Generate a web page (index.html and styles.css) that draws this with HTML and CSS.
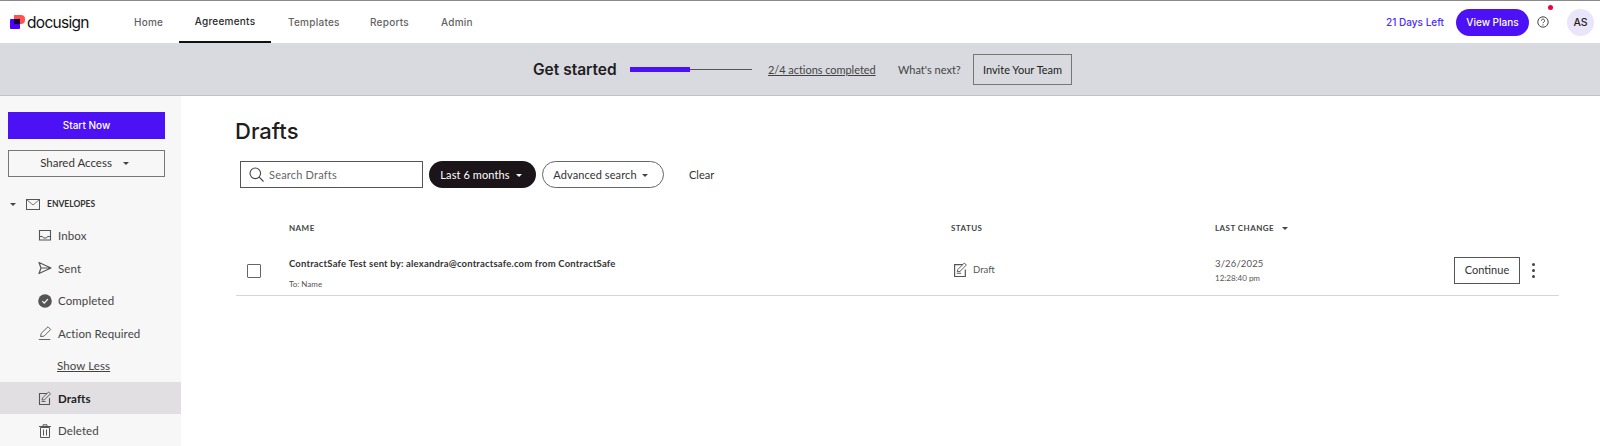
FILE: index.html
```html
<!DOCTYPE html>
<html lang="en">
<head>
<meta charset="utf-8">
<title>Docusign Drafts</title>
<link rel="stylesheet" href="styles.css">
</head>
<body>
<header class="topnav">
  <a class="logo">
    <svg class="logo-mark" viewBox="0 0 15 14" width="15" height="14"><path d="M4 0h7a4 4 0 0 1 4 4v1a4 4 0 0 1-4 4H4z" fill="#ff5252"/><rect x="0" y="4" width="10" height="10" rx="1" fill="#4c00ff"/><rect x="4" y="4" width="6" height="5" fill="#130032"/></svg>
    <span class="logo-text">docusign</span>
  </a>
  <nav class="tabs">
    <a class="tab tab-home">Home</a>
    <a class="tab tab-agreements active">Agreements</a>
    <a class="tab tab-templates">Templates</a>
    <a class="tab tab-reports">Reports</a>
    <a class="tab tab-admin">Admin</a>
  </nav>
  <div class="nav-right">
    <a class="days">21 Days Left</a>
    <a class="plans">View Plans</a>
    <span class="help">
      <svg viewBox="0 0 12 12" width="12" height="12"><circle cx="6" cy="6" r="5.2" fill="none" stroke="#444" stroke-width="1"/><path d="M4.4 4.7a1.6 1.6 0 1 1 2.5 1.3c-.6.4-.9.6-.9 1.2" fill="none" stroke="#444" stroke-width="1"/><circle cx="6" cy="8.9" r=".6" fill="#444"/></svg>
      <i class="dot"></i>
    </span>
    <span class="avatar">AS</span>
  </div>
</header>

<section class="banner">
  <strong class="gs">Get started</strong>
  <span class="progress"><i class="progress-fill"></i></span>
  <a class="actions">2/4 actions completed</a>
  <span class="next">What's next?</span>
  <a class="invite">Invite Your Team</a>
</section>

<div class="page">
  <aside class="sidebar">
    <a class="btn-start">Start Now</a>
    <a class="btn-shared">Shared Access <i class="caret"></i></a>
    <div class="env-head">
      <i class="caret caret-env"></i>
      <svg viewBox="0 0 14 11" width="14" height="11"><rect x=".5" y=".5" width="13" height="10" fill="none" stroke="#555" /><path d="M1 1l6 5 6-5" fill="none" stroke="#555" stroke-width=".8"/></svg>
      <span>ENVELOPES</span>
    </div>
    <ul class="menu">
      <li class="item"><svg class="ico" viewBox="0 0 14 14"><path d="M1.5 2.500h11v9.500h-11z" fill="none" stroke="#555" stroke-width="1.100"/><path d="M1.500 8.500h3l1 1.500h3l1-1.500h3" fill="none" stroke="#555"/></svg>Inbox</li>
      <li class="item"><svg class="ico" viewBox="0 0 14 14"><path d="M1 1.500 13 7 1 12.500 3 7zM3 7h10" fill="none" stroke="#555" stroke-width="1.200" stroke-linejoin="round"/></svg>Sent</li>
      <li class="item"><svg class="ico" viewBox="0 0 14 14"><circle cx="7" cy="7" r="6.800" fill="#555"/><path d="M4.300 7.200l2 2 3.500-4" fill="none" stroke="#fff" stroke-width="1.200"/></svg>Completed</li>
      <li class="item"><svg class="ico" viewBox="0 0 14 14"><path d="M2.500 10.500l.8-3.300L10 .8l2.700 2.700-6.700 6.700zM.8 13.500h11.500" fill="none" stroke="#555" stroke-width=".9"/></svg>Action Required</li>
      <li class="item item-link"><a>Show Less</a></li>
      <li class="item selected"><svg class="ico" viewBox="0 0 14 14"><path d="M9 2.500H1.500v11h10V7" fill="none" stroke="#555" stroke-width="1.100"/><path d="M4 9l.5-2 6-6 2 1.800-6 6zM3.500 10.500h4" fill="none" stroke="#555" stroke-width=".9"/></svg>Drafts</li>
      <li class="item"><svg class="ico" viewBox="0 0 14 14"><path d="M2.500 3.500h9v10h-9zM1 2.500h12M5 2.500V.8h4v1.700M5.500 5.500v6M8.500 5.500v6" fill="none" stroke="#555" stroke-width="1"/></svg>Deleted</li>
    </ul>
  </aside>

  <main class="main">
    <h1 class="title">Drafts</h1>
    <div class="filters">
      <label class="search">
        <svg viewBox="0 0 15 15" width="15" height="15"><circle cx="6.300" cy="6.300" r="5.300" fill="none" stroke="#444" stroke-width="1.100"/><path d="M10.200 10.200 14.500 14.500" stroke="#444" stroke-width="1.100"/></svg>
        <span>Search Drafts</span>
      </label>
      <a class="pill pill-dark">Last 6 months <i class="caret caret-light"></i></a>
      <a class="pill pill-outline">Advanced search <i class="caret"></i></a>
      <a class="clear">Clear</a>
    </div>
    <div class="grid grid-head">
      <span></span>
      <span>NAME</span>
      <span>STATUS</span>
      <span>LAST CHANGE <i class="caret caret-head"></i></span>
      <span></span>
    </div>
    <div class="grid grid-row">
      <span class="check"></span>
      <div class="subject">
        <div class="subject-title">ContractSafe Test sent by: alexandra@contractsafe.com from ContractSafe</div>
        <div class="subject-to">To: Name</div>
      </div>
      <div class="status"><svg class="ico" viewBox="0 0 14 14"><path d="M9 2.500H1.500v11h10V7" fill="none" stroke="#555" stroke-width="1.100"/><path d="M4 9l.5-2 6-6 2 1.800-6 6zM3.500 10.500h4" fill="none" stroke="#555" stroke-width=".9"/></svg>Draft</div>
      <div class="changed"><div class="date">3/26/2025</div><div class="time">12:28:40 pm</div></div>
      <div class="row-actions">
        <a class="continue">Continue</a>
        <span class="kebab"><i></i><i></i><i></i></span>
      </div>
    </div>
  </main>
</div>
</body>
</html>
```

FILE: styles.css
```css
* { box-sizing: border-box; }
html, body { margin: 0; height: 446px; overflow: hidden; }
body { font-family: Lato, "Noto Sans", sans-serif; color: #1e1e1e; background: #fff; font-size: 11px; }
a { color: inherit; }
i { display: block; }

.topnav { height: 43px; border-top: 1px solid #8a8a8a; display: flex; align-items: center; padding: 0 6px 0 10px; background: #fff; }
.logo { display: flex; align-items: center; gap: 2px; width: 124px; height: 42px; }
.logo-text { font-family: Inter, sans-serif; font-size: 15.5px; letter-spacing: -.7px; font-weight: 400; color: #111; }
.tabs { display: flex; height: 42px; }
.tab { display: flex; align-items: center; font-family: Inter, sans-serif; font-size: 10px; font-weight: 500; color: #636363; letter-spacing: .25px; }
.tab-home { margin-right: 17px; width: 28px; }
.tab-agreements { margin-right: 17px; width: 92px; justify-content: center; color: #2a2a2a; border-bottom: 2.500px solid #111; }
.tab-templates { margin-right: 32px; width: 50px; }
.tab-reports { margin-right: 33px; width: 38px; }
.nav-right { margin-left: auto; display: flex; align-items: center; }
.days { color: #4c2cff; font-family: Inter, sans-serif; font-size: 10px; font-weight: 500; margin-right: 12px; }
.plans { width: 73px; height: 27px; border-radius: 14px; background: #4c12f5; color: #fff; font-family: Inter, sans-serif; font-size: 10px; font-weight: 500; display: flex; align-items: center; justify-content: center; margin-right: 8px; }
.help { position: relative; width: 12px; height: 12px; margin-right: 18px; display: block; }
.help svg { display: block; }
.dot { position: absolute; left: 11px; top: -11px; width: 5px; height: 5px; border-radius: 50%; background: #f0003c; }
.avatar { width: 27px; height: 27px; border-radius: 50%; background: #e9e5fb; display: flex; align-items: center; justify-content: center; font-family: Inter, sans-serif; font-size: 10.500px; font-weight: 500; color: #222; }

.banner { height: 53px; background: #d9dae0; border-bottom: 1px solid #bfc0c8; display: flex; align-items: center; padding-left: 533px; }
.gs { font-family: Inter, sans-serif; font-size: 15.500px; font-weight: 600; width: 97px; color: #1e1e1e; }
.progress { width: 122px; height: 1px; background: #555; position: relative; margin-right: 16px; }
.progress-fill { position: absolute; left: 0; top: -2px; width: 60px; height: 5px; background: #4c12f5; }
.actions { text-decoration: underline; color: #444; font-size: 11px; width: 130px; letter-spacing: -.05px; }
.next { color: #444; font-size: 11px; width: 75px; }
.invite { width: 99px; height: 31px; border: 1px solid #777; display: flex; align-items: center; justify-content: center; font-size: 11px; color: #222; }

.page { display: flex; height: 350px; }
.sidebar { width: 181px; background: #f7f7f7; padding: 16px 0 0 8px; flex: none; }
.btn-start { display: flex; align-items: center; justify-content: center; width: 157px; height: 27px; padding-bottom: 2px; background: #4c12f5; color: #fff; font-family: Inter, sans-serif; font-size: 10px; font-weight: 500; }
.btn-shared { display: flex; align-items: center; justify-content: center; gap: 11px; width: 157px; height: 27px; margin-top: 11px; padding: 0 4px 2px 0; border: 1px solid #777; font-size: 11.500px; color: #333; }
.caret { width: 0; height: 0; border-left: 3px solid transparent; border-right: 3px solid transparent; border-top: 3px solid #444; margin-top: 2px; display: inline-block; vertical-align: middle; }
.caret-light { border-top-color: #fff; margin-left: 4px; }
.caret-head { margin-left: 5px; margin-top: 0; }
.env-head { display: flex; align-items: center; margin-top: 20px; height: 14px; font-size: 8.500px; font-weight: 700; color: #333; }
.caret-env { margin: 0 10px 0 2px; }
.env-head span { margin-left: 7px; }
.menu { list-style: none; margin: 8px 0 0 -8px; padding: 0; }
.item { height: 32.700px; padding-left: 38px; display: flex; align-items: center; gap: 6px; font-size: 11.500px; color: #444; letter-spacing: .1px; }
.ico { width: 14px; height: 14px; flex: none; }
.item-link { padding-left: 57px; height: 32px; text-decoration: underline; }
.selected { background: #e1dfe2; font-weight: 700; color: #222; }

.main { flex: 1; padding: 0 41px 0 55px; }
.title { margin: 22px 0 0 -1px; font-family: Inter, sans-serif; font-size: 22px; line-height: 26px; font-weight: 500; color: #1e1e1e; }
.filters { display: flex; align-items: center; margin: 17px 0 0 4px; }
.search { width: 183px; height: 27px; border: 1px solid #555; display: flex; align-items: center; gap: 5px; padding: 0 0 1px 8px; color: #666; font-size: 11px; letter-spacing: .2px; }
.pill { height: 27px; border-radius: 14px; display: flex; align-items: center; justify-content: center; padding-bottom: 1px; font-size: 11px; letter-spacing: .1px; }
.pill-dark { background: #1b1418; color: #fff; width: 107px; margin-left: 6px; padding-right: 3px; gap: 2px; }
.pill-outline { border: 1px solid #666; width: 122px; margin-left: 6px; gap: 5px; padding-right: 5px; color: #333; }
.clear { margin-left: 25px; padding-bottom: 1px; color: #333; }
.grid { display: grid; grid-template-columns: 53px 662px 264px 121px 1fr; }
.grid-head { margin-top: 31px; font-size: 8px; font-weight: 700; letter-spacing: .45px; color: #444; height: 17px; align-items: center; }
.grid-row { border-bottom: 1px solid #d6d6d6; height: 60px; padding-top: 8px; }
.check { width: 14px; height: 14px; border: 1px solid #666; border-radius: 1px; margin: 20px 0 0 11px; display: block; }
.subject-title { margin-top: 14px; font-size: 9.500px; font-weight: 700; color: #333; letter-spacing: .18px; }
.subject-to { margin-top: 10px; font-size: 8px; color: #555; }
.status { display: flex; align-items: center; gap: 5px; padding-left: 2px; height: 50px; font-size: 9.500px; color: #555; }
.status .ico { width: 15px; height: 15px; }
.date { margin-top: 14px; font-size: 9.500px; letter-spacing: .15px; color: #555; }
.time { margin-top: 4px; font-size: 8px; color: #555; }
.row-actions { display: flex; align-items: center; justify-content: flex-end; height: 52px; padding-right: 24px; }
.continue { width: 66px; height: 27px; padding-bottom: 1px; border: 1px solid #555; display: flex; align-items: center; justify-content: center; font-size: 11px; color: #333; }
.kebab { display: flex; flex-direction: column; gap: 3px; margin-left: 12px; }
.kebab i { width: 3px; height: 3px; border-radius: 50%; background: #444; }
```
